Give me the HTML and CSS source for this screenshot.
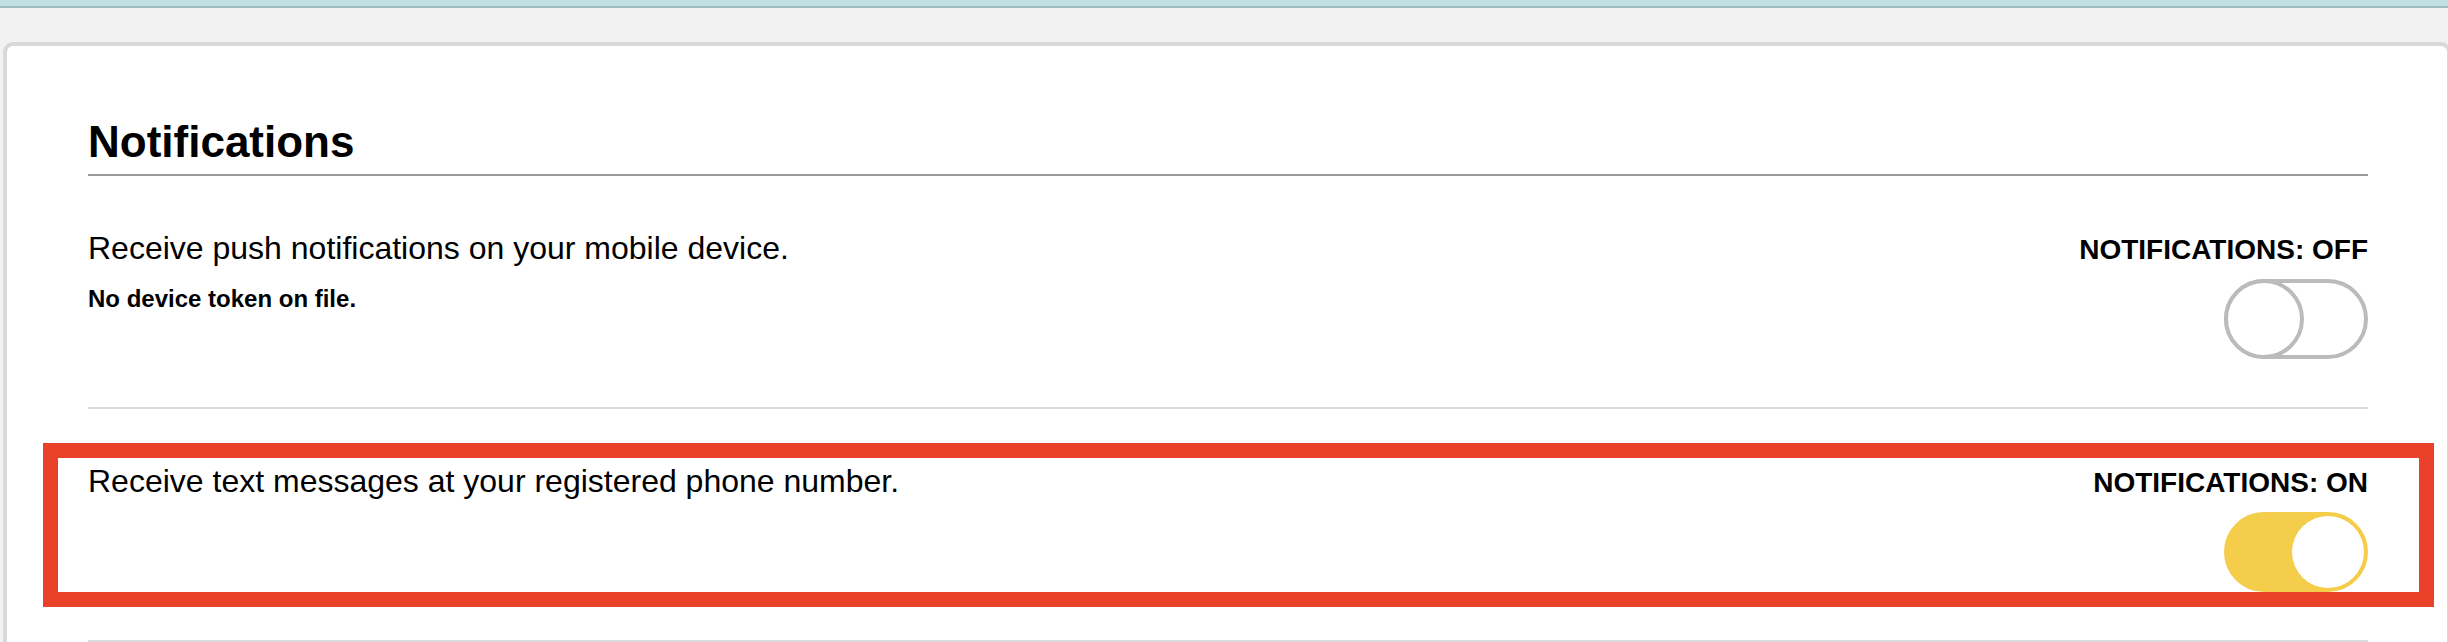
FILE: index.html
```html
<!DOCTYPE html>
<html lang="en">
<head>
<meta charset="utf-8">
<title>Notifications</title>
<link rel="stylesheet" href="styles.css">
</head>
<body>
<div class="topbar"></div>
<main class="card">
  <h2 class="section-title">Notifications</h2>

  <div class="setting">
    <div class="setting-text">
      <p class="desc">Receive push notifications on your mobile device.</p>
      <p class="note">No device token on file.</p>
    </div>
    <div class="setting-control">
      <div class="state-label">NOTIFICATIONS: OFF</div>
      <div class="toggle toggle-off"><span class="knob"></span></div>
    </div>
  </div>

  <div class="setting">
    <div class="setting-text">
      <p class="desc">Receive text messages at your registered phone number.</p>
    </div>
    <div class="setting-control">
      <div class="state-label">NOTIFICATIONS: ON</div>
      <div class="toggle toggle-on"><span class="knob"></span></div>
    </div>
  </div>
</main>
<div class="highlight"></div>
</body>
</html>
```

FILE: styles.css
```css
html, body {
  margin: 0;
  padding: 0;
  overflow: hidden;
}

body {
  background: #f2f2f2;
  font-family: "Liberation Sans", Arial, Helvetica, sans-serif;
  color: #000;
  position: relative;
  height: 642px;
}

.topbar {
  height: 6px;
  background: #bfe0e2;
  border-bottom: 2px solid #9dbdc0;
}

.card {
  box-sizing: border-box;
  width: 2448px;
  height: 600px;
  overflow: hidden;
  margin: 34px 0 0 3px;
  padding: 71px 79px 0 81px;
  background: #fff;
  border: 4px solid #d9d9d9;
  border-bottom: 0;
  border-radius: 10px 10px 0 0;
}

.section-title {
  margin: 0;
  font-size: 44px;
  line-height: 50px;
  font-weight: bold;
  padding-bottom: 7px;
  border-bottom: 2px solid #999;
}

.setting {
  display: flex;
  justify-content: space-between;
  align-items: flex-start;
  padding: 54px 0 48px;
  border-bottom: 2px solid #dcdcdc;
}

.desc {
  margin: 0;
  font-size: 32px;
  line-height: 37px;
}

.note {
  margin: 18px 0 0;
  font-size: 24px;
  line-height: 28px;
  font-weight: bold;
}

.setting-control {
  display: flex;
  flex-direction: column;
  align-items: flex-end;
}

.state-label {
  font-size: 28px;
  line-height: 39px;
  font-weight: bold;
  text-align: right;
}

.toggle {
  box-sizing: border-box;
  display: flex;
  align-items: center;
  width: 144px;
  height: 80px;
  margin-top: 10px;
  border-radius: 40px;
  border: 4px solid #bbbbbb;
  background: #fff;
}

.toggle-off {
  justify-content: flex-start;
}

.toggle-off .knob {
  box-sizing: border-box;
  width: 80px;
  height: 80px;
  margin: -4px;
  border-radius: 50%;
  border: 4px solid #bbbbbb;
  background: #fff;
}

.toggle-on {
  justify-content: flex-end;
  background: #f4cd4b;
  border-color: #f4cd4b;
}

.toggle-on .knob {
  width: 72px;
  height: 72px;
  border-radius: 50%;
  background: #fff;
}

.highlight {
  position: absolute;
  box-sizing: border-box;
  left: 43px;
  top: 443px;
  width: 2391px;
  height: 164px;
  border: 15px solid #e9412a;
}
```
